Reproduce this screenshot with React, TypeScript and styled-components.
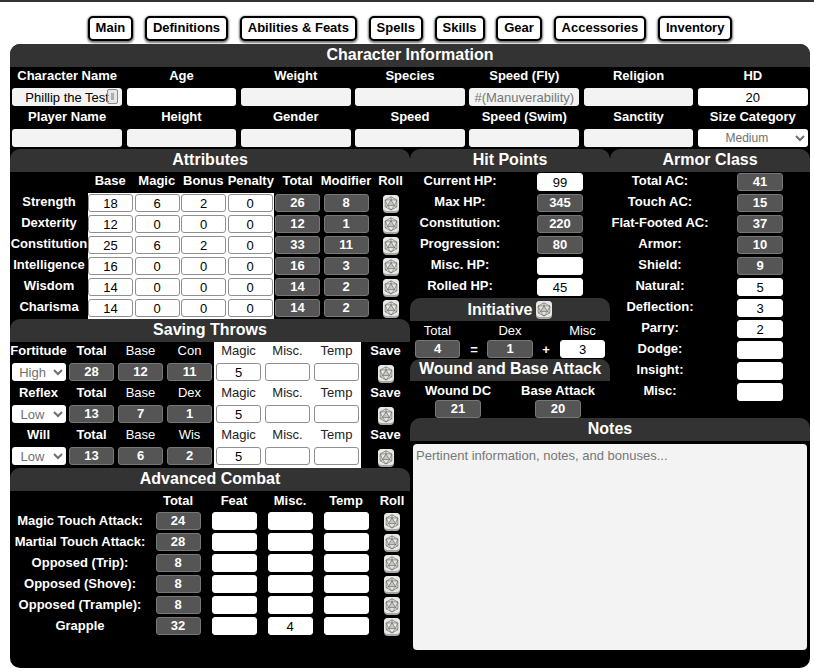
import React from 'react';
import styled, { createGlobalStyle } from 'styled-components';

const GlobalStyle = createGlobalStyle`
  html, body {
    margin: 0;
    padding: 0;
    background: #fff;
  }
  body {
    font-family: "Liberation Sans", Arial, sans-serif;
    font-size: 13px;
    border-top: 2px solid #333;
  }
  * {
    box-sizing: border-box;
  }
`;

const Page = styled.div`
  width: 800px;
  margin-left: 10px;
  height: 670px;
`;

const Nav = styled.nav`
  display: flex;
  justify-content: center;
  gap: 11.7px;
  padding-top: 14px;
  height: 42px;
`;

const NavButton = styled.button`
  height: 25px;
  padding: 0 6px 2px;
  background: #fff;
  border: 2px solid #000;
  border-radius: 5px;
  box-shadow: 0 1px 2px 1px #777;
  font-family: inherit;
  font-size: 13px;
  font-weight: bold;
  color: #000;
`;

const Sheet = styled.div`
  background: #000;
  border-radius: 10px;
  height: 624px;
  color: #fff;
`;

const Header = styled.h2`
  margin: 0;
  height: ${(p) => p.$height ?? 23}px;
  line-height: ${(p) => p.$lineHeight ?? 21}px;
  background: #333;
  border-radius: 10px 10px 0 0;
  font-size: 16px;
  font-weight: bold;
  text-align: center;
  color: #fff;
`;

const InfoGrid = styled.div`
  display: grid;
  grid-template-columns: repeat(7, 1fr);
  grid-template-rows: 21px 20px 21px 20px;
  height: 82px;
`;

const InfoCell = styled.div`
  position: relative;
  padding: 0 2.3px;
  text-align: center;
`;

const Label = styled.div`
  font-size: 13px;
  font-weight: ${(p) => (p.$light ? 'normal' : 'bold')};
  line-height: 18px;
  text-align: center;
  white-space: nowrap;
`;

const InfoInput = styled.input`
  display: block;
  width: 100%;
  height: 18px;
  padding: 0 1px;
  background: ${(p) => (p.$filled ? '#fff' : '#f3f3f3')};
  border: 0;
  border-radius: 3px;
  font-family: inherit;
  font-size: 13px;
  color: #000;
  text-align: center;
  &::placeholder {
    color: #777;
    opacity: 1;
  }
`;

const FillBadge = styled.span`
  position: absolute;
  top: 1px;
  right: 6px;
  width: 11px;
  height: 15px;
  background: rgba(205, 205, 205, 0.35);
  border: 1px solid #8a8a8a;
  border-radius: 2px;
  &::after {
    content: '';
    position: absolute;
    left: 3px;
    top: 3px;
    width: 3px;
    height: 7px;
    background: rgba(150, 150, 150, 0.7);
  }
`;

const SizeSelect = styled.select`
  display: block;
  width: 100%;
  height: 18px;
  padding: 0;
  background: #fff;
  border: 0;
  border-radius: 3px;
  font-family: inherit;
  font-size: 12px;
  color: #6f6f6f;
  text-align: center;
`;

const Body = styled.div`
  display: grid;
  grid-template-columns: 400px 400px;
  height: 519px;
`;

const Column = styled.div`
  display: flex;
  flex-direction: column;
`;

const RightTop = styled.div`
  display: grid;
  grid-template-columns: 200px 200px;
  height: 269px;
`;

const WhiteCell = styled.div`
  width: 100%;
  height: 21px;
  display: flex;
  align-items: center;
  justify-content: flex-start;
  background: #fff;
`;

const Box = styled.input`
  display: block;
  width: ${(p) => p.$w ?? 45}px;
  height: 18px;
  padding: 0 1px;
  background: #fff;
  border: 1px solid #8f8f8f;
  border-radius: 3px;
  font-family: inherit;
  font-size: 13px;
  color: #000;
  text-align: center;
`;

const PlainBox = styled(Box)`
  border-color: #fff;
`;

const Stat = styled.div`
  width: ${(p) => p.$w ?? 45}px;
  height: 18px;
  line-height: 16px;
  background: #555;
  border: 1px solid #777;
  border-radius: 3px;
  font-size: 13px;
  font-weight: bold;
  color: #fff;
  text-align: center;
`;

const AttrGrid = styled.div`
  display: grid;
  grid-template-columns: 78px repeat(4, 46.5px) 47px 50px 1fr;
  grid-auto-rows: 21px;
  height: 147px;
  align-items: center;
  justify-items: center;
  &::before {
    content: '';
    grid-row: 1;
    grid-column: 1;
  }
  input,
  ${Stat} {
    margin: 1px 0 2px;
  }
`;

const AttrHead = styled(Label)`
  align-self: start;
  margin-left: ${(p) => (p.$nudge ? '-2px' : '0')};
`;

const RowLabel = styled(Label)`
  line-height: 15px;
  margin-top: -4px;
`;

const DieSvg = styled.svg`
  display: block;
  width: 16px;
  height: 18px;
  margin: 2px 0 1px;
`;

const Die = () => (
  <DieSvg viewBox="0 0 16 18">
    <rect x="0" y="0" width="16" height="18" rx="4" fill="#a8a8a4" />
    <rect x="0" y="0" width="16" height="16" rx="4" fill="#e8e8e4" />
    <g fill="none" stroke="#6c6c68" strokeWidth="0.7">
      <path d="M8 1.8 13.8 5V11.8L8 15 2.2 11.8V5Z" />
      <path d="M8 4.8 11.5 10.6H4.5Z" fill="#c4c4c0" />
      <path d="M8 1.8V4.8M13.8 5 8 4.8 2.2 5M13.8 11.8 11.5 10.6M2.2 11.8 4.5 10.6M8 15 11.5 10.6M8 15 4.5 10.6M2.2 5 4.5 10.6M13.8 5 11.5 10.6" />
    </g>
  </DieSvg>
);

const SaveGrid = styled.div`
  display: grid;
  grid-template-columns: 57px repeat(7, 49px);
  grid-auto-rows: 21px;
  height: 126px;
  align-items: start;
  justify-items: center;
  ${WhiteCell} {
    align-items: flex-start;
    justify-content: center;
  }
`;

const SaveSelect = styled.select`
  display: block;
  width: 54px;
  height: 18px;
  padding: 0;
  background: #fff;
  border: 0;
  border-radius: 3px;
  font-family: inherit;
  font-size: 13px;
  color: #6f6f6f;
  text-align: center;
`;

const WhiteHead = styled(WhiteCell)`
  color: #222;
  font-size: 13px;
  line-height: 18px;
`;

const CombatGrid = styled.div`
  display: grid;
  grid-template-columns: 140px 56px 56px 56px 56px 1fr;
  grid-template-rows: 20px;
  grid-auto-rows: 21px;
  align-items: center;
  justify-items: center;
  input,
  ${Stat} {
    margin: 1px 0 2px;
  }
  ${RowLabel} {
    margin-top: -2px;
  }
`;

const SideGrid = styled.div`
  display: grid;
  grid-template-columns: 100px 100px;
  grid-auto-rows: 21px;
  align-items: center;
  justify-items: center;
  input,
  ${Stat} {
    margin: 1px 0 2px;
  }
`;

const Initiative = styled.div`
  display: grid;
  grid-template-columns: 55px 18px 54px 18px 55px;
  grid-template-rows: 19px 18px;
  height: 38px;
  justify-items: center;
  align-items: center;
`;

const Operator = styled.div`
  font-weight: bold;
  font-size: 13px;
`;

const HeaderRow = styled(Header)`
  display: flex;
  align-items: center;
  justify-content: center;
  gap: 4px;
`;

const WoundGrid = styled.div`
  display: grid;
  grid-template-columns: 96px 104px;
  grid-template-rows: 19px 18px;
  justify-items: center;
  align-items: center;
`;

const NotesArea = styled.textarea`
  display: block;
  width: 394px;
  height: 206px;
  margin: 3px 3px 0;
  padding: 4px 3px;
  background: #f3f3f3;
  border: 0;
  border-radius: 4px;
  resize: none;
  font-family: inherit;
  font-size: 13px;
  &::placeholder {
    color: #777;
    opacity: 1;
  }
`;

const navItems = ['Main', 'Definitions', 'Abilities & Feats', 'Spells', 'Skills', 'Gear', 'Accessories', 'Inventory'];

const attributes = [
  ['Strength', '18', '6', '2', '0', '26', '8'],
  ['Dexterity', '12', '0', '0', '0', '12', '1'],
  ['Constitution', '25', '6', '2', '0', '33', '11'],
  ['Intelligence', '16', '0', '0', '0', '16', '3'],
  ['Wisdom', '14', '0', '0', '0', '14', '2'],
  ['Charisma', '14', '0', '0', '0', '14', '2'],
];

const saves = [
  { name: 'Fortitude', rank: 'High', total: '28', base: '12', stat: 'Con', mod: '11' },
  { name: 'Reflex', rank: 'Low', total: '13', base: '7', stat: 'Dex', mod: '1' },
  { name: 'Will', rank: 'Low', total: '13', base: '6', stat: 'Wis', mod: '2' },
];

const combat = [
  ['Magic Touch Attack:', '24', ''],
  ['Martial Touch Attack:', '28', ''],
  ['Opposed (Trip):', '8', ''],
  ['Opposed (Shove):', '8', ''],
  ['Opposed (Trample):', '8', ''],
  ['Grapple', '32', '4'],
];

const hitPoints = [
  ['Current HP:', '99', true],
  ['Max HP:', '345', false],
  ['Constitution:', '220', false],
  ['Progression:', '80', false],
  ['Misc. HP:', '', true],
  ['Rolled HP:', '45', true],
] as const;

const armor = [
  ['Total AC:', '41', false],
  ['Touch AC:', '15', false],
  ['Flat-Footed AC:', '37', false],
  ['Armor:', '10', false],
  ['Shield:', '9', false],
  ['Natural:', '5', true],
  ['Deflection:', '3', true],
  ['Parry:', '2', true],
  ['Dodge:', '', true],
  ['Insight:', '', true],
  ['Misc:', '', true],
] as const;

const infoTop = ['Character Name', 'Age', 'Weight', 'Species', 'Speed (Fly)', 'Religion', 'HD'];
const infoBottom = ['Player Name', 'Height', 'Gender', 'Speed', 'Speed (Swim)', 'Sanctity', 'Size Category'];
const attrHeads = ['Base', 'Magic', 'Bonus', 'Penalty', 'Total', 'Modifier', 'Roll'];

const SideRows = ({ rows }: { rows: readonly (readonly [string, string, boolean])[] }) => (
  <SideGrid>
    {rows.map(([name, value, editable]) => (
      <React.Fragment key={name}>
        <RowLabel>{name}</RowLabel>
        {editable ? <PlainBox $w={46} defaultValue={value} /> : <Stat $w={46}>{value}</Stat>}
      </React.Fragment>
    ))}
  </SideGrid>
);

export default function App() {
  return (
    <Page>
      <GlobalStyle />
      <Nav>
        {navItems.map((item) => (
          <NavButton key={item}>{item}</NavButton>
        ))}
      </Nav>
      <Sheet>
        <Header>Character Information</Header>
        <InfoGrid>
          {infoTop.map((label) => (
            <InfoCell key={label}>
              <Label>{label}</Label>
            </InfoCell>
          ))}
          <InfoCell>
            <InfoInput defaultValue="Phillip the Test" />
            <FillBadge />
          </InfoCell>
          <InfoCell>
            <InfoInput $filled />
          </InfoCell>
          <InfoCell>
            <InfoInput />
          </InfoCell>
          <InfoCell>
            <InfoInput />
          </InfoCell>
          <InfoCell>
            <InfoInput placeholder="#(Manuverability)" />
          </InfoCell>
          <InfoCell>
            <InfoInput />
          </InfoCell>
          <InfoCell>
            <InfoInput $filled defaultValue="20" />
          </InfoCell>
          {infoBottom.map((label) => (
            <InfoCell key={label}>
              <Label>{label}</Label>
            </InfoCell>
          ))}
          {infoBottom.slice(0, 6).map((label) => (
            <InfoCell key={label}>
              <InfoInput />
            </InfoCell>
          ))}
          <InfoCell>
            <SizeSelect defaultValue="Medium">
              <option>Small</option>
              <option>Medium</option>
              <option>Large</option>
            </SizeSelect>
          </InfoCell>
        </InfoGrid>
        <Body>
          <Column>
            <Header>Attributes</Header>
            <AttrGrid>
              {attrHeads.map((head, index) => (
                <AttrHead key={head} $nudge={index < 3}>
                  {head}
                </AttrHead>
              ))}
              {attributes.map(([name, base, magic, bonus, penalty, total, modifier]) => (
                <React.Fragment key={name}>
                  <RowLabel>{name}</RowLabel>
                  {[base, magic, bonus, penalty].map((value, index) => (
                    <WhiteCell key={index}>
                      <Box defaultValue={value} />
                    </WhiteCell>
                  ))}
                  <Stat>{total}</Stat>
                  <Stat>{modifier}</Stat>
                  <Die />
                </React.Fragment>
              ))}
            </AttrGrid>
            <Header>Saving Throws</Header>
            <SaveGrid>
              {saves.map((save) => (
                <React.Fragment key={save.name}>
                  <Label>{save.name}</Label>
                  <Label>Total</Label>
                  <Label $light>Base</Label>
                  <Label $light>{save.stat}</Label>
                  <WhiteHead>Magic</WhiteHead>
                  <WhiteHead>Misc.</WhiteHead>
                  <WhiteHead>Temp</WhiteHead>
                  <Label>Save</Label>
                  <SaveSelect defaultValue={save.rank}>
                    <option>High</option>
                    <option>Low</option>
                  </SaveSelect>
                  <Stat>{save.total}</Stat>
                  <Stat>{save.base}</Stat>
                  <Stat>{save.mod}</Stat>
                  <WhiteCell>
                    <Box defaultValue="5" />
                  </WhiteCell>
                  <WhiteCell>
                    <Box />
                  </WhiteCell>
                  <WhiteCell>
                    <Box />
                  </WhiteCell>
                  <Die />
                </React.Fragment>
              ))}
            </SaveGrid>
            <Header>Advanced Combat</Header>
            <CombatGrid>
              <span />
              {['Total', 'Feat', 'Misc.', 'Temp', 'Roll'].map((head) => (
                <Label key={head}>{head}</Label>
              ))}
              {combat.map(([name, total, misc]) => (
                <React.Fragment key={name}>
                  <RowLabel>{name}</RowLabel>
                  <Stat>{total}</Stat>
                  <PlainBox />
                  <PlainBox defaultValue={misc} />
                  <PlainBox />
                  <Die />
                </React.Fragment>
              ))}
            </CombatGrid>
          </Column>
          <Column>
            <RightTop>
              <Column>
                <Header>Hit Points</Header>
                <SideRows rows={hitPoints} />
                <HeaderRow>
                  Initiative <Die />
                </HeaderRow>
                <Initiative>
                  <Label $light>Total</Label>
                  <span />
                  <Label $light>Dex</Label>
                  <span />
                  <Label $light>Misc</Label>
                  <Stat>4</Stat>
                  <Operator>=</Operator>
                  <Stat $w={46}>1</Stat>
                  <Operator>+</Operator>
                  <PlainBox defaultValue="3" />
                </Initiative>
                <Header $height={22} $lineHeight={19}>
                  Wound and Base Attack
                </Header>
                <WoundGrid>
                  <Label>Wound DC</Label>
                  <Label>Base Attack</Label>
                  <Stat $w={46}>21</Stat>
                  <Stat $w={46}>20</Stat>
                </WoundGrid>
              </Column>
              <Column>
                <Header>Armor Class</Header>
                <SideRows rows={armor} />
              </Column>
            </RightTop>
            <Header>Notes</Header>
            <NotesArea placeholder="Pertinent information, notes, and bonuses..." />
          </Column>
        </Body>
      </Sheet>
    </Page>
  );
}
